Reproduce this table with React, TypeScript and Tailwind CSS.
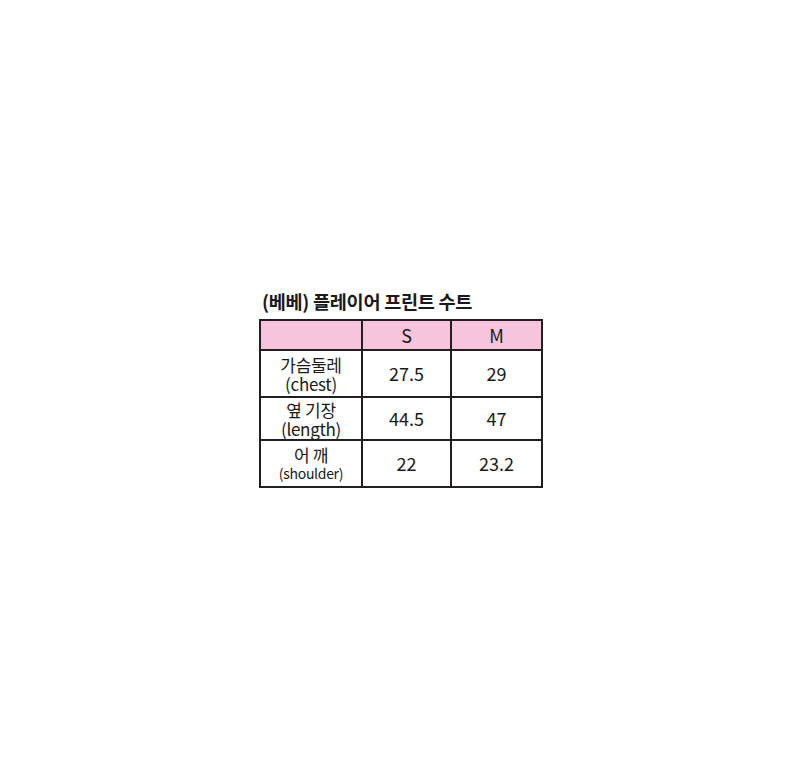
import React from 'react';

const rows = [
  { ko: '가슴둘레', en: '(chest)', s: '27.5', m: '29', h: 'h-[47px]' },
  { ko: '옆 기장', en: '(length)', s: '44.5', m: '47', h: 'h-[43px]' },
  { ko: '어 깨', en: '(shoulder)', s: '22', m: '23.2', h: 'h-[47px]' },
];

export default function App() {
  return (
    <div
      className="w-[800px] h-[780px] bg-white text-[#1a1a1a]"
      style={{ fontFamily: '"Noto Sans CJK KR", "Noto Sans", sans-serif' }}
    >
      <div className="pt-[288px] pl-[259px]">
        <h1 className="pl-[3px] text-[18.6px] leading-[25px] font-bold tracking-[-0.3px] mb-[6px]">
          (베베) 플레이어 프린트 수트
        </h1>
        <table className="border-collapse border-2 border-[#231f20] w-[284px]">
          <thead>
            <tr className="h-[30px] bg-[#f6c5db]">
              <th className="w-[102px] border-2 border-[#231f20]" />
              <th className="w-[89px] border-2 border-[#231f20] text-[18px] font-normal leading-none">S</th>
              <th className="border-2 border-[#231f20] text-[18px] font-normal leading-none">M</th>
            </tr>
          </thead>
          <tbody>
            {rows.map((r) => (
              <tr key={r.en} className={r.h}>
                <td className="border-2 border-[#231f20] text-center p-0 tracking-[-0.3px]">
                  <div className="text-[17px] leading-[19px]">{r.ko}</div>
                  <div className={r.en === '(shoulder)' ? 'text-[14px] leading-[19px]' : 'text-[17px] leading-[19px]'}>
                    {r.en}
                  </div>
                </td>
                <td className="border-2 border-[#231f20] text-center text-[18px]">{r.s}</td>
                <td className="border-2 border-[#231f20] text-center text-[18px]">{r.m}</td>
              </tr>
            ))}
          </tbody>
        </table>
      </div>
    </div>
  );
}
